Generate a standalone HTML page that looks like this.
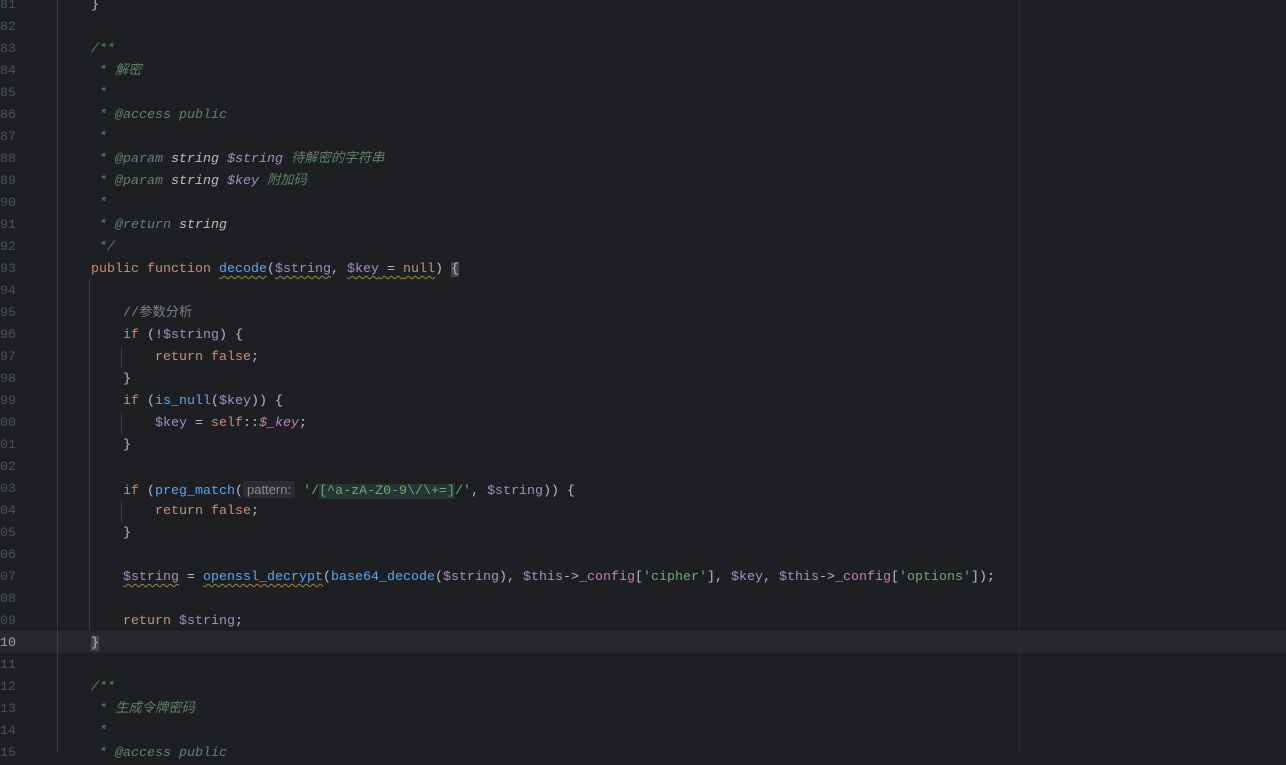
<!DOCTYPE html>
<html><head><meta charset="utf-8"><style>
body{margin:0;width:1286px;height:752px;overflow:hidden;background:#1e1f22;position:relative;font-family:"Liberation Mono","Noto Sans CJK SC",monospace;font-size:13.33px;}
.row{position:absolute;left:0;height:22px;line-height:22px;width:1286px;white-space:pre;color:#bcbec4}
.ln{position:absolute;left:-32px;width:48px;text-align:right;color:#4b5059}
.cur .ln{color:#a1a3ab}
.code{position:absolute;left:91px}
.cur{background:#26282e}
.k{color:#cf8e6d}.v{color:#a88bc7}.f{color:#56a8f5}.s{color:#6aab73}.c{color:#7a7e85}
.d{color:#5f826b;font-style:italic}
.dw{color:#bcbec4;font-style:italic}.dv{color:#a88bc7;font-style:italic}
.p{color:#c77dbb}
.w{text-decoration:underline wavy #a0864a;text-decoration-thickness:1px;text-underline-offset:3px}
.g{position:absolute;width:1px;background:#393b40}
.hint{background:#2b2d30;color:#868a91;font-family:"Liberation Sans",sans-serif;font-size:13px;border-radius:3px;padding:1px 4px}
.re{background:#263535}
.br{background:#43454a}
</style></head><body>
<div class="g" style="left:1019px;top:0;height:752px;background:#2b2d30"></div>
<div class="row" style="top:-5px"><span class="ln">181</span><span class="code">}</span></div>
<div class="row" style="top:17px"><span class="ln">182</span></div>
<div class="row" style="top:39px"><span class="ln">183</span><span class="code d">/**</span></div>
<div class="row" style="top:61px"><span class="ln">184</span><span class="code d"> * 解密</span></div>
<div class="row" style="top:83px"><span class="ln">185</span><span class="code d"> *</span></div>
<div class="row" style="top:105px"><span class="ln">186</span><span class="code d"> * @access public</span></div>
<div class="row" style="top:127px"><span class="ln">187</span><span class="code d"> *</span></div>
<div class="row" style="top:149px"><span class="ln">188</span><span class="code d"> * @param <span class="dw">string</span> <span class="dv">$string</span> 待解密的字符串</span></div>
<div class="row" style="top:171px"><span class="ln">189</span><span class="code d"> * @param <span class="dw">string</span> <span class="dv">$key</span> 附加码</span></div>
<div class="row" style="top:193px"><span class="ln">190</span><span class="code d"> *</span></div>
<div class="row" style="top:215px"><span class="ln">191</span><span class="code d"> * @return <span class="dw">string</span></span></div>
<div class="row" style="top:237px"><span class="ln">192</span><span class="code d"> */</span></div>
<div class="row" style="top:259px"><span class="ln">193</span><span class="code"><span class="k">public function </span><span class="f w">decode</span>(<span class="v w">$string</span>, <span class="w"><span class="v">$key</span> = <span class="k">null</span></span>) <span class="br">{</span></span></div>
<div class="row" style="top:281px"><span class="ln">194</span></div>
<div class="row" style="top:303px"><span class="ln">195</span><span class="code c">    //参数分析</span></div>
<div class="row" style="top:325px"><span class="ln">196</span><span class="code">    <span class="k">if</span> (!<span class="v">$string</span>) {</span></div>
<div class="row" style="top:347px"><span class="ln">197</span><span class="code">        <span class="k">return false</span>;</span></div>
<div class="row" style="top:369px"><span class="ln">198</span><span class="code">    }</span></div>
<div class="row" style="top:391px"><span class="ln">199</span><span class="code">    <span class="k">if</span> (<span class="f">is_null</span>(<span class="v">$key</span>)) {</span></div>
<div class="row" style="top:413px"><span class="ln">200</span><span class="code">        <span class="v">$key</span> = <span class="k">self</span>::<span class="p" style="font-style:italic">$_key</span>;</span></div>
<div class="row" style="top:435px"><span class="ln">201</span><span class="code">    }</span></div>
<div class="row" style="top:457px"><span class="ln">202</span></div>
<div class="row" style="top:479px"><span class="ln">203</span><span class="code">    <span class="k">if</span> (<span class="f">preg_match</span>(<span class="hint">pattern:</span> <span class="s">'/<span class="re">[^a-zA-Z0-9\/\+=]</span>/'</span>, <span class="v">$string</span>)) {</span></div>
<div class="row" style="top:501px"><span class="ln">204</span><span class="code">        <span class="k">return false</span>;</span></div>
<div class="row" style="top:523px"><span class="ln">205</span><span class="code">    }</span></div>
<div class="row" style="top:545px"><span class="ln">206</span></div>
<div class="row" style="top:567px"><span class="ln">207</span><span class="code">    <span class="v w">$string</span> = <span class="f w">openssl_decrypt</span>(<span class="f">base64_decode</span>(<span class="v">$string</span>), <span class="v">$this</span>-&gt;<span class="p">_config</span>[<span class="s">'cipher'</span>], <span class="v">$key</span>, <span class="v">$this</span>-&gt;<span class="p">_config</span>[<span class="s">'options'</span>]);</span></div>
<div class="row" style="top:589px"><span class="ln">208</span></div>
<div class="row" style="top:611px"><span class="ln">209</span><span class="code">    <span class="k">return</span> <span class="v">$string</span>;</span></div>
<div class="row cur" style="top:631px;height:22px"><span class="ln" style="top:2px;line-height:22px">210</span><span class="code" style="top:2px"><span class="br">}</span></span></div>
<div class="row" style="top:655px"><span class="ln">211</span></div>
<div class="row" style="top:677px"><span class="ln">212</span><span class="code d">/**</span></div>
<div class="row" style="top:699px"><span class="ln">213</span><span class="code d"> * 生成令牌密码</span></div>
<div class="row" style="top:721px"><span class="ln">214</span><span class="code d"> *</span></div>
<div class="row" style="top:743px"><span class="ln">215</span><span class="code d"> * @access public</span></div>
<div class="g" style="left:57px;top:0;height:752px"></div>
<div class="g" style="left:89px;top:280px;height:350px"></div>
<div class="g" style="left:121px;top:346px;height:22px"></div>
<div class="g" style="left:121px;top:412px;height:22px"></div>
<div class="g" style="left:121px;top:500px;height:22px"></div>
</body></html>
